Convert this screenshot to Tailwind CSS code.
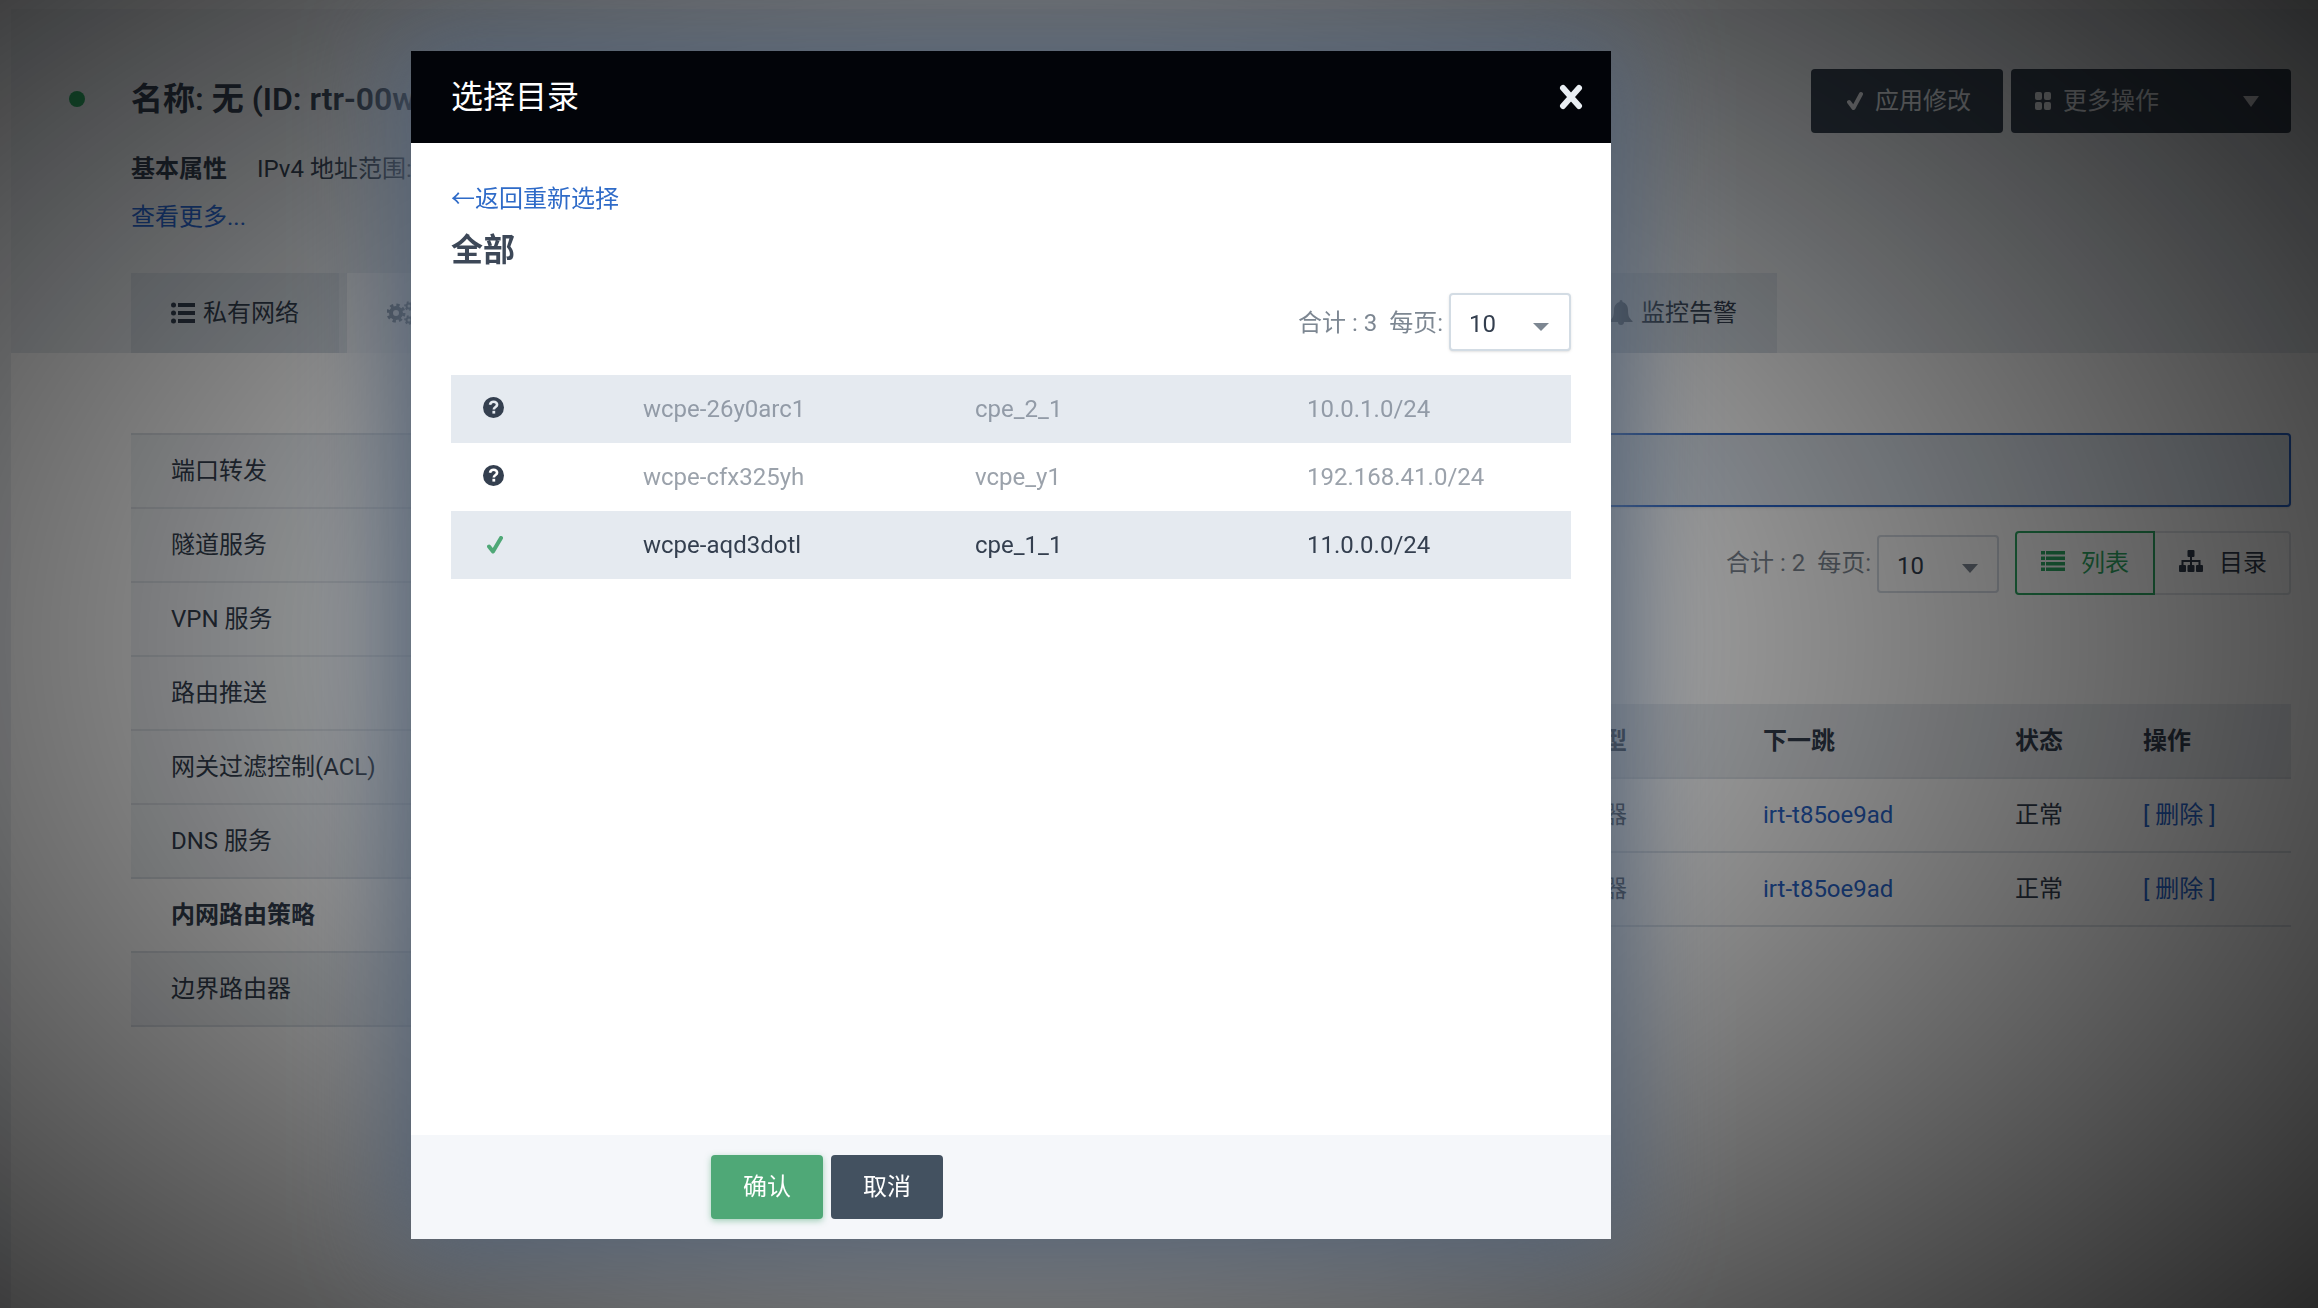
<!DOCTYPE html>
<html lang="zh-CN">
<head>
<meta charset="utf-8">
<meta name="viewport" content="width=device-width, initial-scale=1">
<title>选择目录</title>
<script src="https://cdn.jsdelivr.net/npm/@tailwindcss/browser@4"></script>
</head>
<body class="h-screen overflow-hidden bg-[#eef0f3] pt-[9px] pl-[11px] font-[Roboto,'Noto_Sans_CJK_SC',sans-serif] text-2xl text-[#343f4f]">

<!-- Router detail page -->
<div class="flex h-full flex-col bg-white">
  <header class="flex h-[344px] shrink-0 flex-col justify-between bg-[#e5e9ed] pl-[120px] pr-[27px]">
    <div class="flex items-start justify-between pt-[60px]">
      <div class="relative flex flex-col whitespace-nowrap">
        <span class="absolute top-[22px] -left-[62px] size-4 rounded-full bg-[#2fa864]"></span>
        <h1 class="mt-1 text-[32px] leading-[52px] font-semibold">名称: 无 (ID: rtr-00w)</h1>
        <p class="mt-5 leading-12"><b class="font-semibold">基本属性</b><span class="ml-[30px]">IPv4 地址范围:</span></p>
        <a href="#" class="leading-12 text-[#2a66cc]">查看更多...</a>
      </div>
      <div class="flex gap-2 text-[#dfe2e6]">
        <button class="flex h-16 w-[192px] items-center justify-center gap-3 rounded bg-[#3a4654] pl-1">
          <svg class="w-4" viewBox="0 0 16 20" fill="none" stroke="currentColor" stroke-width="4" stroke-linecap="round" stroke-linejoin="round"><path d="M2 11l4.500 6L14 3"/></svg>
          应用修改
        </button>
        <button class="flex h-16 w-[280px] items-center gap-3 rounded bg-[#3a4654] pr-8 pl-6">
          <svg class="w-4" viewBox="0 0 16 18" fill="currentColor"><rect width="7" height="8" rx="2"/><rect x="9" width="7" height="8" rx="2"/><rect y="10" width="7" height="8" rx="2"/><rect x="9" y="10" width="7" height="8" rx="2"/></svg>
          更多操作
          <svg class="ml-auto w-4" viewBox="0 0 16 11" fill="currentColor"><path d="M0 0h16L8 11z"/></svg>
        </button>
      </div>
    </div>
    <nav class="flex h-20 w-[1646px]">
      <a href="#" class="flex w-[216px] items-center gap-2 border-r-8 border-[#dfe4e9] bg-[#d3dae1] pl-10">
        <svg class="w-6" viewBox="0 0 24 22" fill="currentColor"><circle cx="2.500" cy="3" r="2.500"/><circle cx="2.500" cy="11" r="2.500"/><circle cx="2.500" cy="19" r="2.500"/><path d="M7 1h17v4H7zM7 9h17v4H7zM7 17h17v4H7z"/></svg>
        私有网络
      </a>
      <a href="#" class="flex w-[300px] items-center gap-2 bg-[#f6f7f9] pl-10">
        <svg class="w-7 text-[#7b8794]" viewBox="0 0 28 24" fill="none" stroke="currentColor"><circle cx="9" cy="12" r="5" stroke-width="4"/><circle cx="9" cy="12" r="8" stroke-width="3" stroke-dasharray="3.300 3"/><circle cx="22" cy="5" r="2.500" stroke-width="2"/><circle cx="22" cy="5" r="4" stroke-width="1.500" stroke-dasharray="2 2"/><circle cx="22" cy="19" r="2.500" stroke-width="2"/><circle cx="22" cy="19" r="4" stroke-width="1.500" stroke-dasharray="2 2"/></svg>
        管理配置
      </a>
      <a href="#" class="flex grow items-center justify-end gap-2 bg-[#d3dae1] pr-10">
        <svg class="w-6 text-[#66727f]" viewBox="0 0 24 26" fill="currentColor"><path d="M12 0c1 0 1.500.8 1.500 2C17 3 19 6 19 10c0 6 1 8 4.500 11v1H15a3 3 0 0 1-6 0H.5v-1C4 18 5 16 5 10c0-4 2-7 5.500-8 0-1.200.5-2 1.500-2z"/></svg>
        监控告警
      </a>
    </nav>
  </header>

  <div class="flex pt-20 pr-[27px] pl-[120px]">
    <aside class="w-[320px] shrink-0 border-t-2 border-[#dce1e7] bg-[#f1f4f7]">
      <ul>
        <li class="border-b-2 border-[#dce1e7] pl-10 leading-[72px]"><a href="#">端口转发</a></li>
        <li class="border-b-2 border-[#dce1e7] pl-10 leading-[72px]"><a href="#">隧道服务</a></li>
        <li class="border-b-2 border-[#dce1e7] pl-10 leading-[72px]"><a href="#">VPN 服务</a></li>
        <li class="border-b-2 border-[#dce1e7] pl-10 leading-[72px]"><a href="#">路由推送</a></li>
        <li class="border-b-2 border-[#dce1e7] pl-10 leading-[72px]"><a href="#">网关过滤控制(ACL)</a></li>
        <li class="border-b-2 border-[#dce1e7] pl-10 leading-[72px]"><a href="#">DNS 服务</a></li>
        <li class="border-b-2 border-[#dce1e7] bg-white pl-10 leading-[72px] font-semibold"><a href="#">内网路由策略</a></li>
        <li class="border-b-2 border-[#dce1e7] pl-10 leading-[72px]"><a href="#">边界路由器</a></li>
      </ul>
    </aside>
    <main class="ml-10 flex grow flex-col">
      <div class="h-[74px] rounded border-2 border-[#2a66cc] bg-[#e1e8f0] shadow-sm"></div>
      <div class="mt-6 flex items-center justify-end">
        <label for="pageSize" class="mr-[6px] whitespace-pre text-[#7d8792]">合计 : 2  每页:</label>
        <span class="relative flex pt-[2px]">
          <select id="pageSize" class="h-[58px] w-[122px] appearance-none rounded border-2 border-[#d3d9e2] bg-white pt-1 pl-[18px]"><option>10</option></select>
          <svg class="pointer-events-none absolute top-[31px] right-[21px] w-4 text-[#7d8792]" viewBox="0 0 16 9" fill="currentColor"><path d="M0 0h16L8 9z"/></svg>
        </span>
        <div class="ml-4 flex">
          <button class="flex h-16 w-[140px] items-center gap-4 rounded-l border-2 border-[#2fa864] pl-6 text-[#2fa864]">
            <svg class="mb-1 w-6" viewBox="0 0 24 20" fill="currentColor"><path d="M0 0h4v3.500H0zM5 0h19v3.500H5zM0 5.500h4V9H0zM5 5.500h19V9H5zM0 11h4v3.500H0zM5 11h19v3.500H5zM0 16.500h4V20H0zM5 16.500h19V20H5z"/></svg>
            列表
          </button>
          <button class="flex h-16 w-[136px] items-center gap-4 rounded-r border-2 border-l-0 border-[#dfe3e8] pl-6">
            <svg class="mb-1 w-6" viewBox="0 0 24 22" fill="currentColor"><rect x="8.500" width="7" height="7" rx="1"/><rect y="15" width="7" height="7" rx="1"/><rect x="8.500" y="15" width="7" height="7" rx="1"/><rect x="17" y="15" width="7" height="7" rx="1"/><path d="M11 6h2v10h-2zM2.500 10h19v6h-2v-4h-15v4h-2z"/></svg>
            目录
          </button>
        </div>
      </div>
      <table class="mt-[109px] w-full table-fixed text-left">
        <colgroup><col><col class="w-[256px]"><col class="w-[252px]"><col class="w-[128px]"><col class="w-[148px]"></colgroup>
        <thead>
          <tr class="h-[74px] border-b-2 border-[#dce1e7] bg-[#e8ebef]">
            <th class="font-semibold">目的网络</th><th class="font-semibold">下一跳类型</th><th class="font-semibold">下一跳</th><th class="font-semibold">状态</th><th class="font-semibold">操作</th>
          </tr>
        </thead>
        <tbody>
          <tr class="h-[74px] border-b-2 border-[#dce1e7]">
            <td></td><td>边界路由器</td><td><a href="#" class="text-[#2a66cc]">irt-t85oe9ad</a></td><td>正常</td><td><a href="#" class="text-[#2a66cc]">[ 删除 ]</a></td>
          </tr>
          <tr class="h-[74px] border-b-2 border-[#dce1e7]">
            <td></td><td>边界路由器</td><td><a href="#" class="text-[#2a66cc]">irt-t85oe9ad</a></td><td>正常</td><td><a href="#" class="text-[#2a66cc]">[ 删除 ]</a></td>
          </tr>
        </tbody>
      </table>
    </main>
  </div>
</div>

<!-- Backdrop and dialog -->
<div class="fixed inset-0 flex items-start justify-center bg-[radial-gradient(62%_71%_at_44%_49%,rgba(0,0,0,0.11)_0%,rgba(0,0,0,0.93)_130%)] pt-[51px] pr-[296px]">
  <section role="dialog" aria-labelledby="dialogTitle" class="flex w-[1200px] flex-col bg-white shadow-[0_0_90px_16px_#526175]">
    <div class="flex h-[92px] items-center justify-between bg-[#020409] pr-7 pl-10 text-white">
      <h2 id="dialogTitle" class="text-[32px]">选择目录</h2>
      <button aria-label="关闭"><svg class="w-6 text-[#e9eef3]" viewBox="0 0 24 26" fill="none" stroke="currentColor" stroke-width="6" stroke-linecap="round"><path d="M4 4l16 18M20 4L4 22"/></svg></button>
    </div>
    <div class="flex min-h-[992px] flex-col px-10 pt-8">
      <a href="#" class="self-start leading-12 text-[#2f6bc8]">←返回重新选择</a>
      <h3 class="text-[32px] leading-[54px] font-semibold text-[#3d4858]">全部</h3>
      <div class="mt-4 flex items-center justify-end">
        <label for="dialogPageSize" class="mr-[6px] whitespace-pre pt-[2px] text-[#7d8792]">合计 : 3  每页:</label>
        <span class="relative flex">
          <select id="dialogPageSize" class="h-[58px] w-[122px] appearance-none rounded border-2 border-[#d3dce4] bg-white pt-1 pl-[18px] shadow-sm"><option>10</option></select>
          <svg class="pointer-events-none absolute top-[30px] right-[22px] w-4 text-[#7d8792]" viewBox="0 0 16 8" fill="currentColor"><path d="M0 0h16L8 8z"/></svg>
        </span>
      </div>
      <table class="mt-6 w-full table-fixed">
        <colgroup><col class="w-[168px]"><col class="w-[332px]"><col class="w-[332px]"><col></colgroup>
        <tbody>
          <tr class="h-[68px] bg-[#e5eaf0] text-[#929ba7]">
            <td class="pl-8"><svg class="mb-1 w-[21px] text-[#343f4f]" viewBox="0 0 21 21"><circle cx="10.500" cy="10.500" r="10.500" fill="currentColor"/><path d="M7 7.800c.4-2 1.700-3 3.600-3 2.200 0 3.500 1.300 3.500 2.900 0 2.200-3.300 2.300-3.300 4.800" fill="none" stroke="#e5eaf0" stroke-width="2.600"/><path d="M9.400 13.800h2.800v2.800H9.400z" fill="#e5eaf0"/></svg></td>
            <td class="pl-6">wcpe-26y0arc1</td><td class="pl-6">cpe_2_1</td><td class="pl-6">10.0.1.0/24</td>
          </tr>
          <tr class="h-[68px] text-[#9ba2ab]">
            <td class="pl-8"><svg class="mb-1 w-[21px] text-[#343f4f]" viewBox="0 0 21 21"><circle cx="10.500" cy="10.500" r="10.500" fill="currentColor"/><path d="M7 7.800c.4-2 1.700-3 3.600-3 2.200 0 3.500 1.300 3.500 2.900 0 2.200-3.300 2.300-3.300 4.800" fill="none" stroke="#fff" stroke-width="2.600"/><path d="M9.400 13.800h2.800v2.800H9.400z" fill="#fff"/></svg></td>
            <td class="pl-6">wcpe-cfx325yh</td><td class="pl-6">vcpe_y1</td><td class="pl-6">192.168.41.0/24</td>
          </tr>
          <tr class="h-[68px] bg-[#e5eaf0]">
            <td class="pl-9"><svg class="w-4 text-[#4fa877]" viewBox="0 0 16 18" fill="none" stroke="currentColor" stroke-width="4" stroke-linecap="round" stroke-linejoin="round"><path d="M2 10.500l4 5L14 2"/></svg></td>
            <td class="pl-6">wcpe-aqd3dotl</td><td class="pl-6">cpe_1_1</td><td class="pl-6">11.0.0.0/24</td>
          </tr>
        </tbody>
      </table>
    </div>
    <div class="flex h-[104px] items-center gap-2 bg-[#f5f7fa] pl-[300px] text-white">
      <button class="h-16 w-28 rounded bg-[#4fa877] shadow-[0_2px_6px_#4fa87780]">确认</button>
      <button class="h-16 w-28 rounded bg-[#435160]">取消</button>
    </div>
  </section>
</div>
</body>
</html>
